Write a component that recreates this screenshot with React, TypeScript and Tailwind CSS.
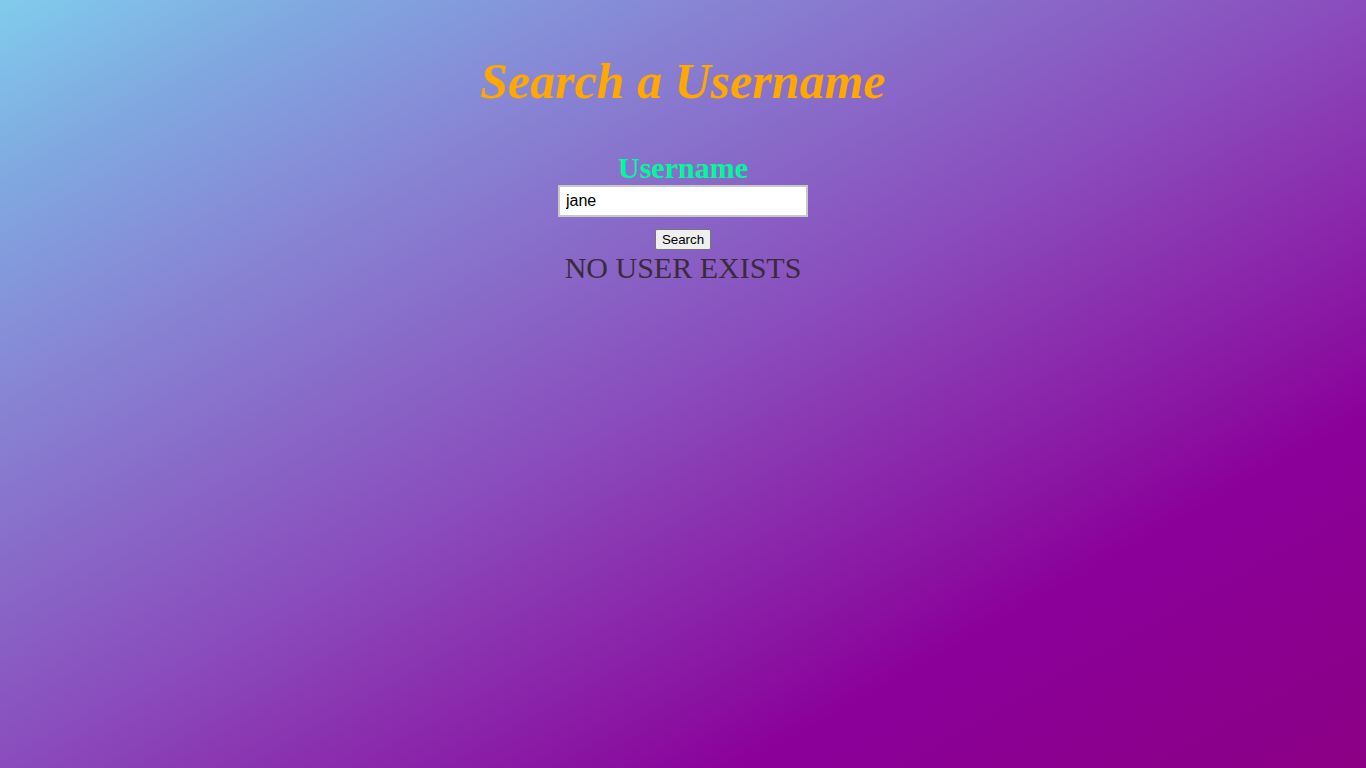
import React from "react";

export default function App() {
  return (
    <div
      className="min-h-[768px] w-full flex flex-col items-center"
      style={{
        background:
          "linear-gradient(to bottom right, #80ccec 0%, #80a8e0 12%, #8787d5 25%, #8a4cbc 50%, #8a10a0 72%, #8b009a 77%, #8b0084 100%)",
        fontFamily: '"Liberation Serif", serif',
      }}
    >
      <h1 className="mt-[49px] text-[50px] leading-[64px] font-bold italic text-[#ffa800]">
        Search a Username
      </h1>
      <div className="mt-[39px] flex flex-col items-center">
        <label className="text-[30px] leading-[31px] mb-[2px] font-bold text-[#00fa9a]">Username</label>
        <input
          defaultValue="jane"
          className="w-[250px] h-[32px] bg-white border-2 border-[#c8c8c8] px-[6px] text-[16px] text-black outline-none"
          style={{ fontFamily: '"Liberation Sans", Arial, sans-serif' }}
        />
        <button
          className="mt-[12px] h-[21px] px-[6px] text-[13.33px] leading-[15px] text-black bg-[#efefef] border border-[#767676] rounded-[2px]"
          style={{ fontFamily: '"Liberation Sans", Arial, sans-serif' }}
        >
          Search
        </button>
        <div className="text-[30px] leading-[36px] text-[#3b2a3b]">NO USER EXISTS</div>
      </div>
    </div>
  );
}
